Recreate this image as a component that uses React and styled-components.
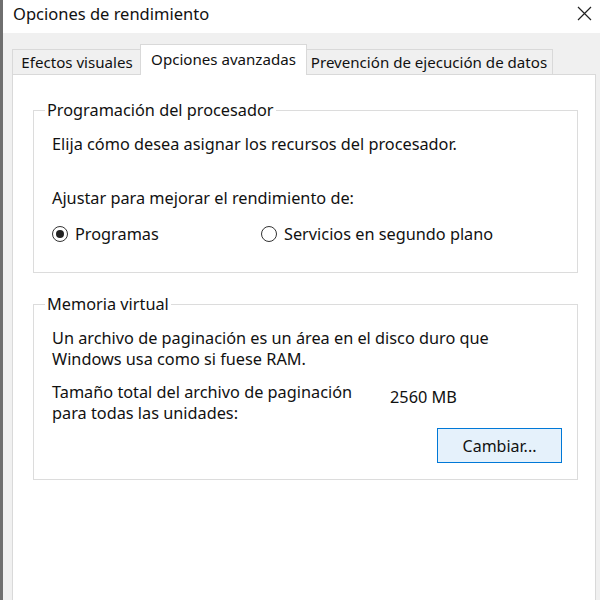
import React from "react";
import styled, { createGlobalStyle } from "styled-components";

const Global = createGlobalStyle`
  html, body {
    margin: 0;
    padding: 0;
    background: #ffffff;
  }
  body {
    font-family: "Noto Sans", "Open Sans", sans-serif;
    font-size: 16.3px;
    color: #111;
  }
`;

const Window = styled.div`
  width: 600px;
  height: 600px;
  box-sizing: border-box;
  border-left: 3px solid #6f6f6f;
  display: flex;
  flex-direction: column;
  overflow: hidden;
`;

const TitleBar = styled.div`
  height: 33px;
  flex: none;
  background: #ffffff;
  display: flex;
  align-items: center;
  justify-content: space-between;
  padding: 0 6px 7px 10px;
  box-sizing: border-box;
`;

const Title = styled.span`
  font-size: 16.5px;
  color: #111;
`;

const CloseButton = styled.button`
  border: none;
  background: transparent;
  width: 20px;
  height: 20px;
  padding: 0;
  display: flex;
  align-items: center;
  justify-content: center;
`;

const Body = styled.div`
  flex: 1;
  background: #f0f0f0;
  padding: 12px 0 0 9px;
  display: flex;
  flex-direction: column;
`;

const TabStrip = styled.div`
  display: flex;
  align-items: flex-end;
  height: 30px;
  flex: none;
  position: relative;
  z-index: 1;
`;

const Tab = styled.div`
  box-sizing: border-box;
  width: ${({ $w }) => $w}px;
  height: ${({ $active }) => ($active ? 31 : 26)}px;
  margin: 0 ${({ $active }) => ($active ? -2 : 0)}px;
  background: ${({ $active }) => ($active ? "#ffffff" : "#f0f0f0")};
  border: 1px solid #d9d9d9;
  border-bottom: ${({ $active }) => ($active ? "none" : "1px solid #d9d9d9")};
  position: relative;
  z-index: ${({ $active }) => ($active ? 2 : 1)};
  display: flex;
  align-items: center;
  justify-content: center;
  padding-bottom: ${({ $active }) => ($active ? 3 : 0)}px;
  font-size: 15.1px;
  white-space: nowrap;
`;

const Panel = styled.div`
  flex: 1;
  background: #ffffff;
  border: 1px solid #d9d9d9;
  border-bottom: none;
  margin-top: -1px;
  margin-right: 4px;
  padding: 24px 17px 0 20px;
  display: flex;
  flex-direction: column;
  gap: 20px;
`;

const Group = styled.fieldset`
  margin: 0;
  min-inline-size: 0;
  border: 1px solid #dcdcdc;
  padding: 0 16px ${({ $pb }) => $pb}px 18px;
  display: flex;
  flex-direction: column;
`;

const Legend = styled.legend`
  margin-left: -7px;
  padding: 0 2px;
  line-height: 22px;
`;

const Text = styled.p`
  margin: ${({ $mt }) => $mt}px 0 0;
  line-height: 21px;
`;

const Options = styled.div`
  display: flex;
  margin-top: 14px;
  height: 22px;
  align-items: center;
`;

const Radio = styled.label`
  display: flex;
  align-items: center;
  gap: 7px;
  width: ${({ $w }) => $w}px;
`;

const RadioCircle = styled.span`
  width: 16px;
  height: 16px;
  box-sizing: border-box;
  border: 1px solid #333;
  border-radius: 50%;
  display: flex;
  align-items: center;
  justify-content: center;
  &::after {
    content: "";
    width: 8px;
    height: 8px;
    border-radius: 50%;
    background: ${({ $checked }) => ($checked ? "#222" : "transparent")};
  }
`;

const SizeRow = styled.div`
  display: grid;
  grid-template-columns: 338px auto;
  margin-top: 12px;
  line-height: 21px;
`;

const SizeValue = styled.span`
  margin-top: 5px;
`;

const Button = styled.button`
  align-self: flex-end;
  margin-top: 4px;
  margin-right: -1px;
  width: 125px;
  height: 35px;
  box-sizing: border-box;
  background: #e5f1fb;
  border: 1px solid #0078d7;
  font-family: inherit;
  font-size: 16px;
  color: #111;
`;

export default function App() {
  return (
    <>
      <Global />
      <Window>
        <TitleBar>
          <Title>Opciones de rendimiento</Title>
          <CloseButton aria-label="Cerrar">
            <svg width="15" height="15" viewBox="0 0 15 15">
              <path d="M1 1 L14 14 M14 1 L1 14" stroke="#222" strokeWidth="1.2" />
            </svg>
          </CloseButton>
        </TitleBar>
        <Body>
          <TabStrip>
            <Tab $w={130}>Efectos visuales</Tab>
            <Tab $w={167} $active>Opciones avanzadas</Tab>
            <Tab $w={248}>Prevención de ejecución de datos</Tab>
          </TabStrip>
          <Panel>
            <Group $pb={27}>
              <Legend>Programación del procesador</Legend>
              <Text $mt={13}>Elija cómo desea asignar los recursos del procesador.</Text>
              <Text $mt={33}>Ajustar para mejorar el rendimiento de:</Text>
              <Options>
                <Radio $w={209}>
                  <RadioCircle $checked />
                  Programas
                </Radio>
                <Radio>
                  <RadioCircle />
                  Servicios en segundo plano
                </Radio>
              </Options>
            </Group>
            <Group $pb={16}>
              <Legend>Memoria virtual</Legend>
              <Text $mt={13}>
                Un archivo de paginación es un área en el disco duro que
                <br />
                Windows usa como si fuese RAM.
              </Text>
              <SizeRow>
                <span>
                  Tamaño total del archivo de paginación
                  <br />
                  para todas las unidades:
                </span>
                <SizeValue>2560 MB</SizeValue>
              </SizeRow>
              <Button>Cambiar...</Button>
            </Group>
          </Panel>
        </Body>
      </Window>
    </>
  );
}
